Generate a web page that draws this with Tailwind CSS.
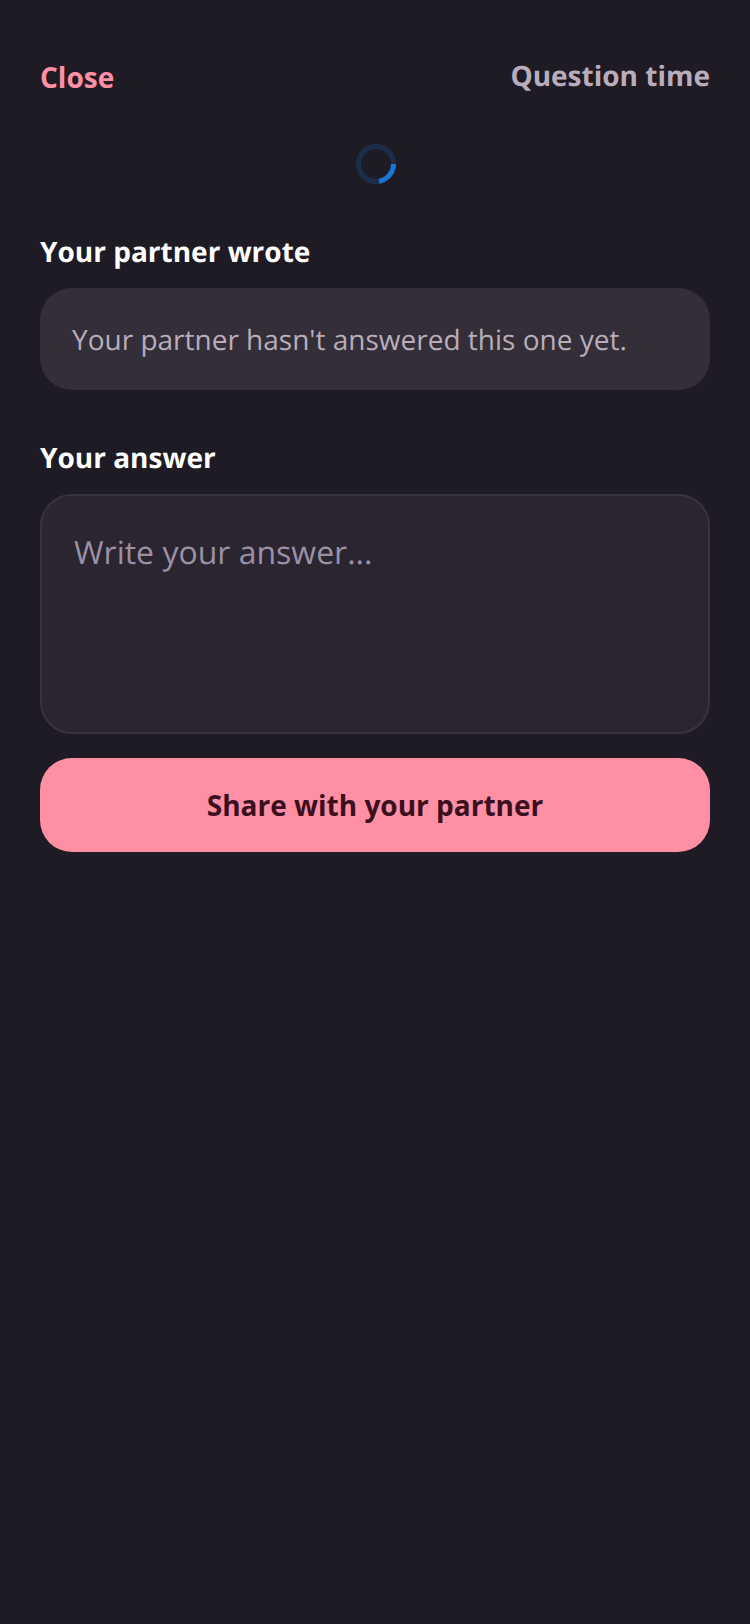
<!DOCTYPE html>
<html lang="en">
  <head>
    <meta charset="UTF-8" />
    <meta name="viewport" content="width=device-width, initial-scale=1.0" />
    <title>Question time</title>
    <script src="https://cdn.jsdelivr.net/npm/@tailwindcss/browser@4"></script>
  </head>
  <body class="bg-[#1e1b24] font-['Open_Sans',sans-serif] [text-rendering:geometricPrecision]">
    <div class="flex h-[1624px] flex-col px-10 pt-[56px]">
      <div class="flex items-start justify-between">
        <button class="mt-[1px] text-[28px] leading-[40px] font-bold text-[#ff8fa3]">Close</button>
        <div class="text-[28px] leading-[40px] font-bold text-[#b9adbb]">Question time</div>
      </div>

      <div class="mt-[47px] flex justify-center">
        <svg class="ml-[1px]" width="40" height="40" viewBox="0 0 40 40" fill="none">
          <circle cx="20" cy="20" r="17.5" stroke="#1c2e4a" stroke-width="5" />
          <path d="M37.5 20A17.5 17.5 0 0 1 23 37.2" stroke="#1976d2" stroke-width="5" />
        </svg>
      </div>

      <div class="mt-[49px] text-[28px] leading-[38px] font-bold text-white">Your partner wrote</div>
      <div class="mt-[17px] flex h-[102px] items-center rounded-[32px] bg-[#332e38] px-8 pt-[1px] text-[28px] text-[#b9adbb]">
        Your partner hasn't answered this one yet.
      </div>

      <div class="mt-[49px] text-[28px] leading-[38px] font-bold text-white">Your answer</div>
      <div class="mt-[17px] h-[240px] rounded-[32px] border-2 border-[#37333f] bg-[#2a252e] px-8 pt-[25px] text-[32px] leading-[64px] text-[#9c90a6]">
        Write your answer...
      </div>

      <button class="mt-[24px] h-[94px] rounded-[32px] bg-[#ff8fa3] text-[28px] font-bold text-[#3a1020]">
        Share with your partner
      </button>
    </div>
  </body>
</html>
